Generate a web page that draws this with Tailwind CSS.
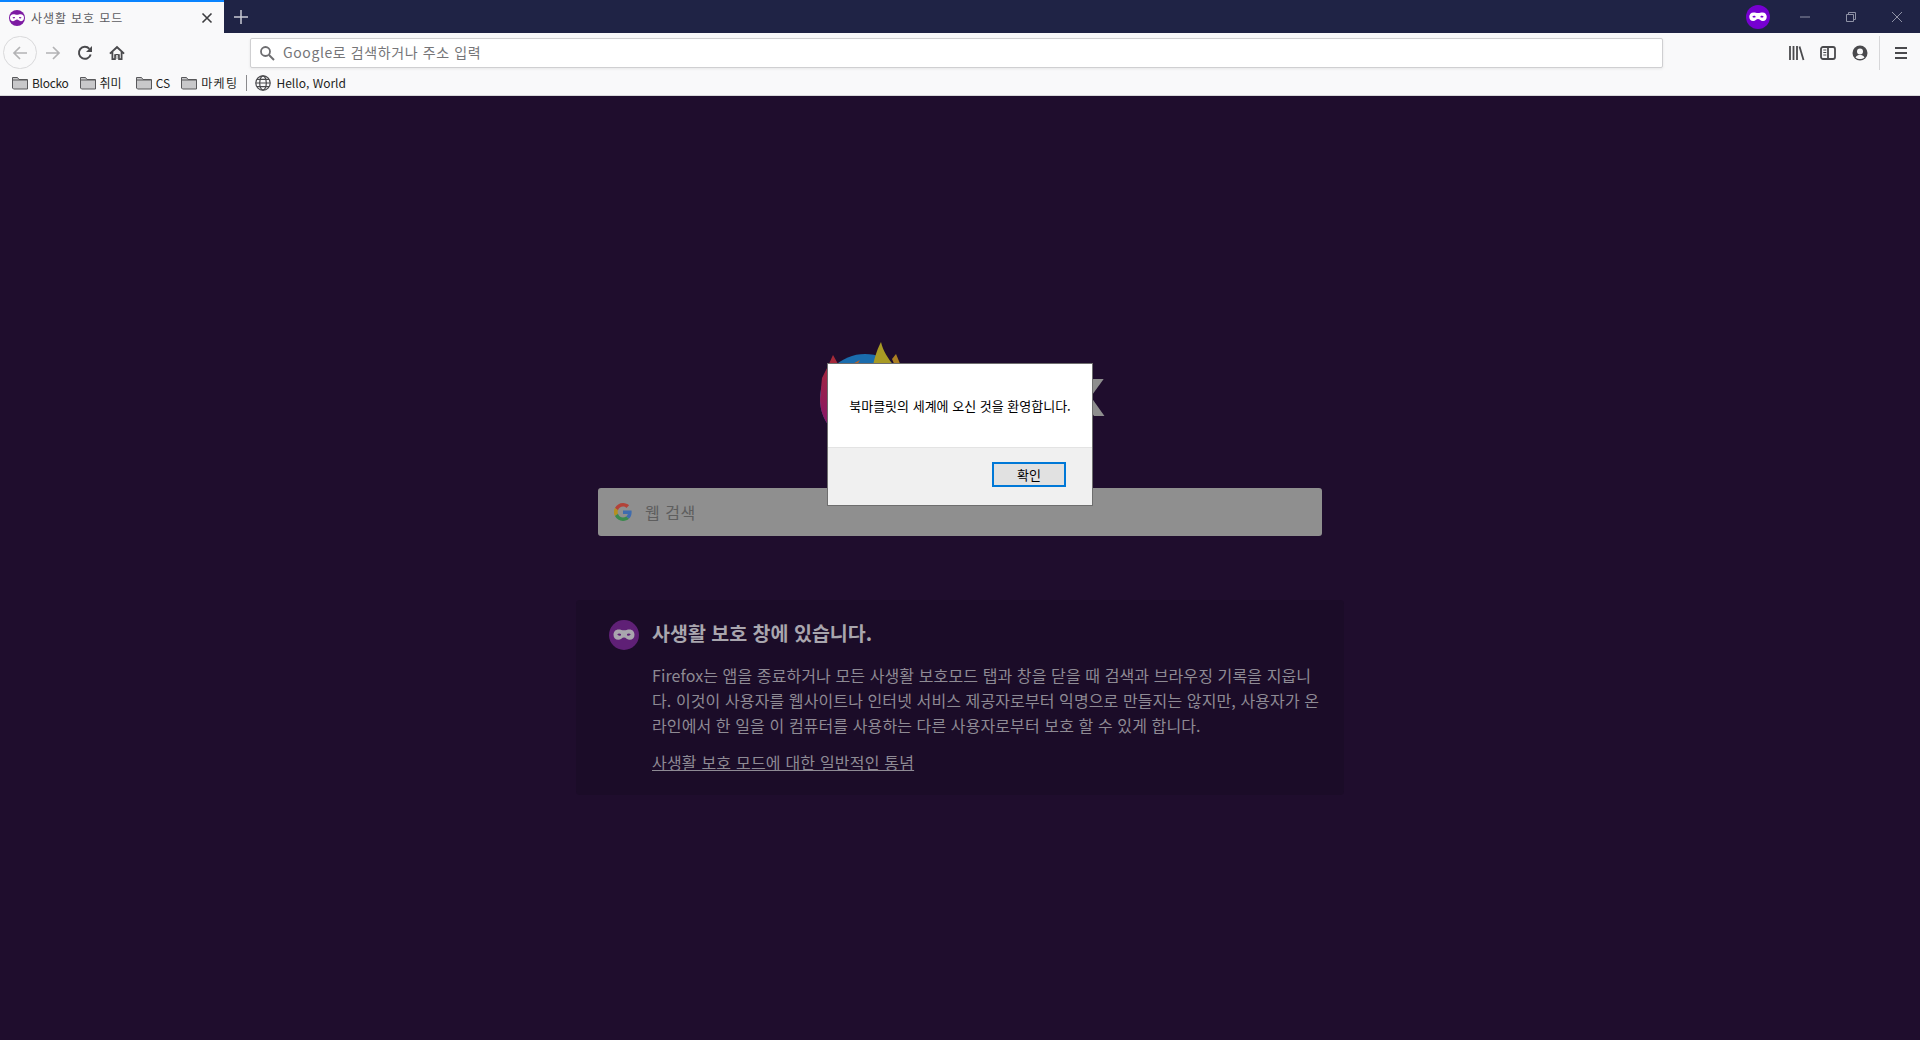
<!DOCTYPE html>
<html lang="ko">
<head>
<meta charset="utf-8">
<title>사생활 보호 모드</title>
<script src="https://cdn.jsdelivr.net/npm/@tailwindcss/browser@4"></script>
</head>
<body class="m-0 overflow-hidden font-['Noto_Sans_CJK_KR','Noto_Sans',sans-serif]">
<div class="relative flex h-[1040px] w-[1920px] flex-col overflow-hidden bg-[#1f0d2d]">

  <!-- Tab strip -->
  <header class="flex h-[33px] items-center bg-[#1f2345]">
    <div class="flex h-full w-[224px] items-center border-t-2 border-[#0a84ff] bg-[#f9f9fa] pl-[9px] pr-[11px]">
      <svg class="h-4 w-4 shrink-0" viewBox="0 0 16 16"><circle cx="8" cy="8" r="8" fill="#7d1ba3"/><path fill="#fff" fill-rule="evenodd" d="M11.600 4.300c-1.400 0-2.300.5-3.600.5s-2.200-.5-3.600-.5C2.300 4.300 1 5.800 1 7.800c0 2.200 1.400 3.400 3.100 3.400 1.800 0 2.600-1.600 3.900-1.600s2.100 1.600 3.900 1.600c1.700 0 3.100-1.200 3.100-3.400 0-2-1.300-3.500-3.400-3.500zM6 8.100c-.9.600-2 .4-2.500-.4.400-.7 1.600-.9 2.500-.3zm4 0c.9.600 2 .4 2.500-.4-.4-.7-1.600-.9-2.500-.3z"/></svg>
      <span class="ml-[6px] flex-1 whitespace-nowrap text-[12px] tracking-[0.9px] text-[#5c5c61]">사생활 보호 모드</span>
      <svg class="h-3 w-3" viewBox="0 0 12 12"><path d="M1.500 1.500l9 9m0-9l-9 9" stroke="#3d3d40" stroke-width="1.600" fill="none"/></svg>
    </div>
    <svg class="ml-[10px] h-[14px] w-[14px]" viewBox="0 0 14 14"><path d="M7 0v14M0 7h14" stroke="#c9cad3" stroke-width="1.500"/></svg>
    <div class="flex-1"></div>
    <div class="flex h-6 w-6 items-center justify-center rounded-full bg-[#7600d1]">
      <svg class="h-[20px] w-[20px]" viewBox="0 0 16 16"><path fill="#fff" fill-rule="evenodd" d="M11.600 4.300c-1.400 0-2.300.5-3.600.5s-2.200-.5-3.600-.5C2.300 4.300 1 5.800 1 7.800c0 2.200 1.400 3.400 3.100 3.400 1.800 0 2.600-1.600 3.900-1.600s2.100 1.600 3.900 1.600c1.700 0 3.100-1.200 3.100-3.400 0-2-1.300-3.500-3.400-3.500zM6 8.100c-.9.600-2 .4-2.500-.4.400-.7 1.600-.9 2.500-.3zm4 0c.9.600 2 .4 2.500-.4-.4-.7-1.600-.9-2.500-.3z"/></svg>
    </div>
    <div class="ml-[30px] flex items-center">
      <svg class="h-[10px] w-[10px]" viewBox="0 0 10 10"><path d="M0 5h10" stroke="#8f92a6" stroke-width="1"/></svg>
      <svg class="ml-[36px] h-[10px] w-[10px]" viewBox="0 0 10 10"><path d="M.5 2.500h7v7h-7zM2.500 2.500v-2h7v7h-2" stroke="#8f92a6" stroke-width="1" fill="none"/></svg>
      <svg class="ml-[36px] mr-[18px] h-[10px] w-[10px]" viewBox="0 0 10 10"><path d="M0 0l10 10M10 0L0 10" stroke="#8f92a6" stroke-width="1" fill="none"/></svg>
    </div>
  </header>

  <!-- Navigation toolbar -->
  <nav class="flex h-[39px] items-center bg-[#f9f9fa] pl-[3px]">
    <div class="flex h-[33px] w-[34px] items-center justify-center rounded-full border border-[#d9d9db]">
      <svg class="h-4 w-4" viewBox="0 0 16 16"><path d="M15 8H2M8 2L2 8l6 6" stroke="#b3b3b5" stroke-width="1.700" fill="none"/></svg>
    </div>
    <svg class="ml-[8px] h-4 w-4" viewBox="0 0 16 16"><path d="M1 8h13M8 2l6 6-6 6" stroke="#b3b3b5" stroke-width="1.700" fill="none"/></svg>
    <svg class="ml-[16px] h-4 w-4" viewBox="0 0 16 16"><path d="M13.700 9.500A6 6 0 1 1 12.400 3.800" stroke="#4a4a4d" stroke-width="2" fill="none"/><path d="M15 1v6H9z" fill="#4a4a4d"/></svg>
    <svg class="ml-[16px] h-4 w-4" viewBox="0 0 16 16"><path d="M8 .8L.3 8l1.200 1.300L2.500 8.400V15h4.300v-4h2.400v4h4.300V8.400l1 .9L15.700 8z" fill="#4a4a4d"/><path d="M8 3.400l3.700 3.400V13.200h-.9V9.200H5.200v4H4.300V6.800z" fill="#f9f9fa"/><path d="M6.500 9h3v4.500h-3z" fill="#4a4a4d"/><path d="M7.300 10h1.400v3.500H7.300z" fill="#f9f9fa"/></svg>
    <div class="ml-[125px] flex h-[30px] w-[1413px] items-center rounded-[2px] border border-[#cfcfd1] bg-white pl-2 shadow-[0_1px_3px_rgba(0,0,0,0.08)]">
      <svg class="h-4 w-4" viewBox="0 0 16 16"><circle cx="6.500" cy="6.500" r="4.500" stroke="#6d6d70" stroke-width="1.800" fill="none"/><path d="M10 10l5 5" stroke="#6d6d70" stroke-width="2"/></svg>
      <span class="ml-[8px] whitespace-nowrap text-[14px] tracking-[0.6px] text-[#757578]">Google로 검색하거나 주소 입력</span>
    </div>
    <svg class="ml-[126px] h-4 w-4" viewBox="0 0 16 16"><path d="M1 1v14M4.500 1v14M8 1v14" stroke="#4a4a4d" stroke-width="1.800"/><path d="M10.500 1.500l4 13.500" stroke="#4a4a4d" stroke-width="1.800"/></svg>
    <svg class="ml-[15px] h-4 w-4" viewBox="0 0 16 16"><rect x="1" y="2" width="14" height="12" rx="2" stroke="#4a4a4d" stroke-width="1.800" fill="none"/><path d="M8 2v12" stroke="#4a4a4d" stroke-width="1.800"/><path d="M3.300 5h3M3.300 7.500h3M3.300 10h3" stroke="#4a4a4d"/></svg>
    <svg class="ml-[16px] h-4 w-4" viewBox="0 0 16 16"><circle cx="8" cy="8" r="7.500" fill="#4a4a4d"/><circle cx="8" cy="6.500" r="3" fill="#f9f9fa"/><path d="M3.500 12.400c1-2 2.800-2.400 4.500-2.400s3.500.4 4.500 2.400C11 13.600 9.500 14 8 14s-3-.4-4.500-1.600z" fill="#f9f9fa"/></svg>
    <div class="ml-[11px] h-[34px] w-px self-center bg-[#d7d7d9]"></div>
    <svg class="ml-[14px] h-[14px] w-[14px]" viewBox="0 0 14 14"><path d="M1 2h12M1 7h12M1 12h12" stroke="#4a4a4d" stroke-width="1.800"/></svg>
  </nav>

  <!-- Bookmarks -->
  <div class="flex h-[24px] items-center border-b border-[#d9d9db] bg-[#f9f9fa] pb-[1px] pl-[12px] text-[12px] text-[#1f1f22]">
    <svg class="h-[14px] w-[16px]" viewBox="0 0 16 14"><path d="M.5 12V1.500h5l1.500 2h8.500V13H1.500z" fill="#c8c8ca" stroke="#58585b"/><path d="M1 4h14" stroke="#58585b"/></svg>
    <span class="ml-[4px] tracking-[-0.3px]">Blocko</span>
    <svg class="ml-[11px] h-[14px] w-[16px]" viewBox="0 0 16 14"><path d="M.5 12V1.500h5l1.500 2h8.500V13H1.500z" fill="#c8c8ca" stroke="#58585b"/><path d="M1 4h14" stroke="#58585b"/></svg>
    <span class="ml-[4px]">취미</span>
    <svg class="ml-[14px] h-[14px] w-[16px]" viewBox="0 0 16 14"><path d="M.5 12V1.500h5l1.500 2h8.500V13H1.500z" fill="#c8c8ca" stroke="#58585b"/><path d="M1 4h14" stroke="#58585b"/></svg>
    <span class="ml-[4px]">CS</span>
    <svg class="ml-[11px] h-[14px] w-[16px]" viewBox="0 0 16 14"><path d="M.5 12V1.500h5l1.500 2h8.500V13H1.500z" fill="#c8c8ca" stroke="#58585b"/><path d="M1 4h14" stroke="#58585b"/></svg>
    <span class="ml-[4px] tracking-[1.400px]">마케팅</span>
    <div class="ml-[8px] h-4 w-px bg-[#8a8a8d]"></div>
    <svg class="ml-[8px] h-4 w-4" viewBox="0 0 16 16"><g stroke="#4a4a4d" fill="none" stroke-width="1.200"><circle cx="8" cy="8" r="7.200"/><ellipse cx="8" cy="8" rx="3.300" ry="7.200"/><path d="M.8 8h14.400M2 4.300h12M2 11.700h12"/></g></svg>
    <span class="ml-[5px]">Hello, World</span>
  </div>

  <!-- Private browsing page -->
  <main class="flex flex-1 flex-col items-center bg-[#1f0d2d] pt-[246px]">
    <div class="flex h-[100px] w-[290px] items-center">
      <svg class="ml-[5px] h-[100px] w-[100px] shrink-0" viewBox="0 0 100 100">
        <defs><linearGradient id="fx" x1="0" y1="0" x2="0" y2="1"><stop offset="0" stop-color="#a82a35"/><stop offset="1" stop-color="#85156a"/></linearGradient></defs>
        <circle cx="45" cy="57" r="45" fill="#1a6cad"/>
        <path d="M13 13L8 24 2 36 0 57c0 10 3 20 10 28h25V24L18 22z" fill="url(#fx)"/>
        <path d="M8 25c8-1 14-2 20-2 5-1 8-3 12-5-2 4-5 6-8 8l-22 4z" fill="#b8632a"/>
        <path d="M53 24C55 13 58 6 61 0c2 9 7 16 13 24z" fill="#a89a24"/>
        <path d="M72 17l4-5 5 12h-6z" fill="#ab7f22"/>
      </svg>
      <span class="flex-1 text-right font-['Liberation_Sans',sans-serif] text-[70px] font-bold leading-none text-[#8e8e8e]">x</span>
    </div>

    <div class="mt-[46px] flex h-[48px] w-[724px] items-center rounded-[3px] bg-[#8f8f8f] pl-4">
      <svg class="h-[18px] w-[18px]" viewBox="0 0 48 48"><path fill="#b34238" d="M24 9.500c3.500 0 6.700 1.200 9.200 3.600l6.900-6.900C35.900 2.400 30.500 0 24 0 14.600 0 6.500 5.400 2.600 13.200l8 6.200C12.400 13.700 17.700 9.500 24 9.500z"/><path fill="#3f6cae" d="M47 24.500c0-1.600-.1-3.100-.4-4.500H24v9h12.900c-.6 3-2.200 5.500-4.700 7.200l7.700 6C44.400 38 47 31.800 47 24.500z"/><path fill="#b58f1f" d="M10.500 28.600A14.500 14.500 0 0 1 10.500 19.400l-8-6.200a24 24 0 0 0 0 21.600z"/><path fill="#3a8a4d" d="M24 48c6.500 0 11.900-2.100 15.900-5.800l-7.700-6c-2.200 1.500-4.900 2.300-8.200 2.300-6.300 0-11.600-4.200-13.500-9.900l-8 6.200C6.500 42.600 14.600 48 24 48z"/></svg>
      <span class="ml-[13px] text-[16px] tracking-[0.5px] text-[#5e5e5e]">웹 검색</span>
    </div>

    <section class="mt-[64px] flex h-[195px] w-[768px] gap-[13px] rounded-[4px] bg-[#1b0c28] pl-[33px] pt-[20px]">
      <div class="flex h-[30px] w-[30px] shrink-0 items-center justify-center rounded-full bg-[#5f2076]">
        <svg class="h-[24px] w-[24px]" viewBox="0 0 16 16"><path fill="#a9a6ae" fill-rule="evenodd" d="M11.600 4.300c-1.400 0-2.300.5-3.600.5s-2.200-.5-3.600-.5C2.300 4.300 1 5.800 1 7.800c0 2.200 1.400 3.400 3.100 3.400 1.800 0 2.600-1.600 3.900-1.600s2.100 1.600 3.900 1.600c1.700 0 3.100-1.200 3.100-3.400 0-2-1.300-3.500-3.400-3.500zM6 8.100c-.9.600-2 .4-2.500-.4.400-.7 1.600-.9 2.500-.3zm4 0c.9.600 2 .4 2.500-.4-.4-.7-1.600-.9-2.500-.3z"/></svg>
      </div>
      <div class="min-w-0">
        <h2 class="whitespace-nowrap text-[19.500px] font-bold leading-[26px] text-[#a9a6ae]">사생활 보호 창에 있습니다.</h2>
        <p class="mt-[17px] whitespace-nowrap text-[16px] leading-[25px] tracking-[0.1px] text-[#8e8a94]">Firefox는 앱을 종료하거나 모든 사생활 보호모드 탭과 창을 닫을 때 검색과 브라우징 기록을 지웁니<br>다. 이것이 사용자를 웹사이트나 인터넷 서비스 제공자로부터 익명으로 만들지는 않지만, 사용자가 온<br>라인에서 한 일을 이 컴퓨터를 사용하는 다른 사용자로부터 보호 할 수 있게 합니다.</p>
        <a class="mt-[12px] inline-block whitespace-nowrap text-[16px] leading-[25px] tracking-[0.2px] text-[#8e8a94] underline">사생활 보호 모드에 대한 일반적인 통념</a>
      </div>
    </section>
  </main>

  <!-- Alert dialog -->
  <div class="absolute left-[827px] top-[363px] flex h-[143px] w-[266px] flex-col border border-[#6e6e6e] bg-white">
    <div class="flex h-[84px] items-center justify-center border-b border-[#e3e3e3] text-[13px] text-black">북마클릿의 세계에 오신 것을 환영합니다.</div>
    <div class="flex flex-1 items-start justify-end bg-[#f0f0f0] pr-[26px] pt-[14px]">
      <button class="flex h-[25px] w-[74px] items-center justify-center border-2 border-[#0078d7] bg-[#e1e1e1] text-[13px] text-black">확인</button>
    </div>
  </div>
</div>
</body>
</html>
